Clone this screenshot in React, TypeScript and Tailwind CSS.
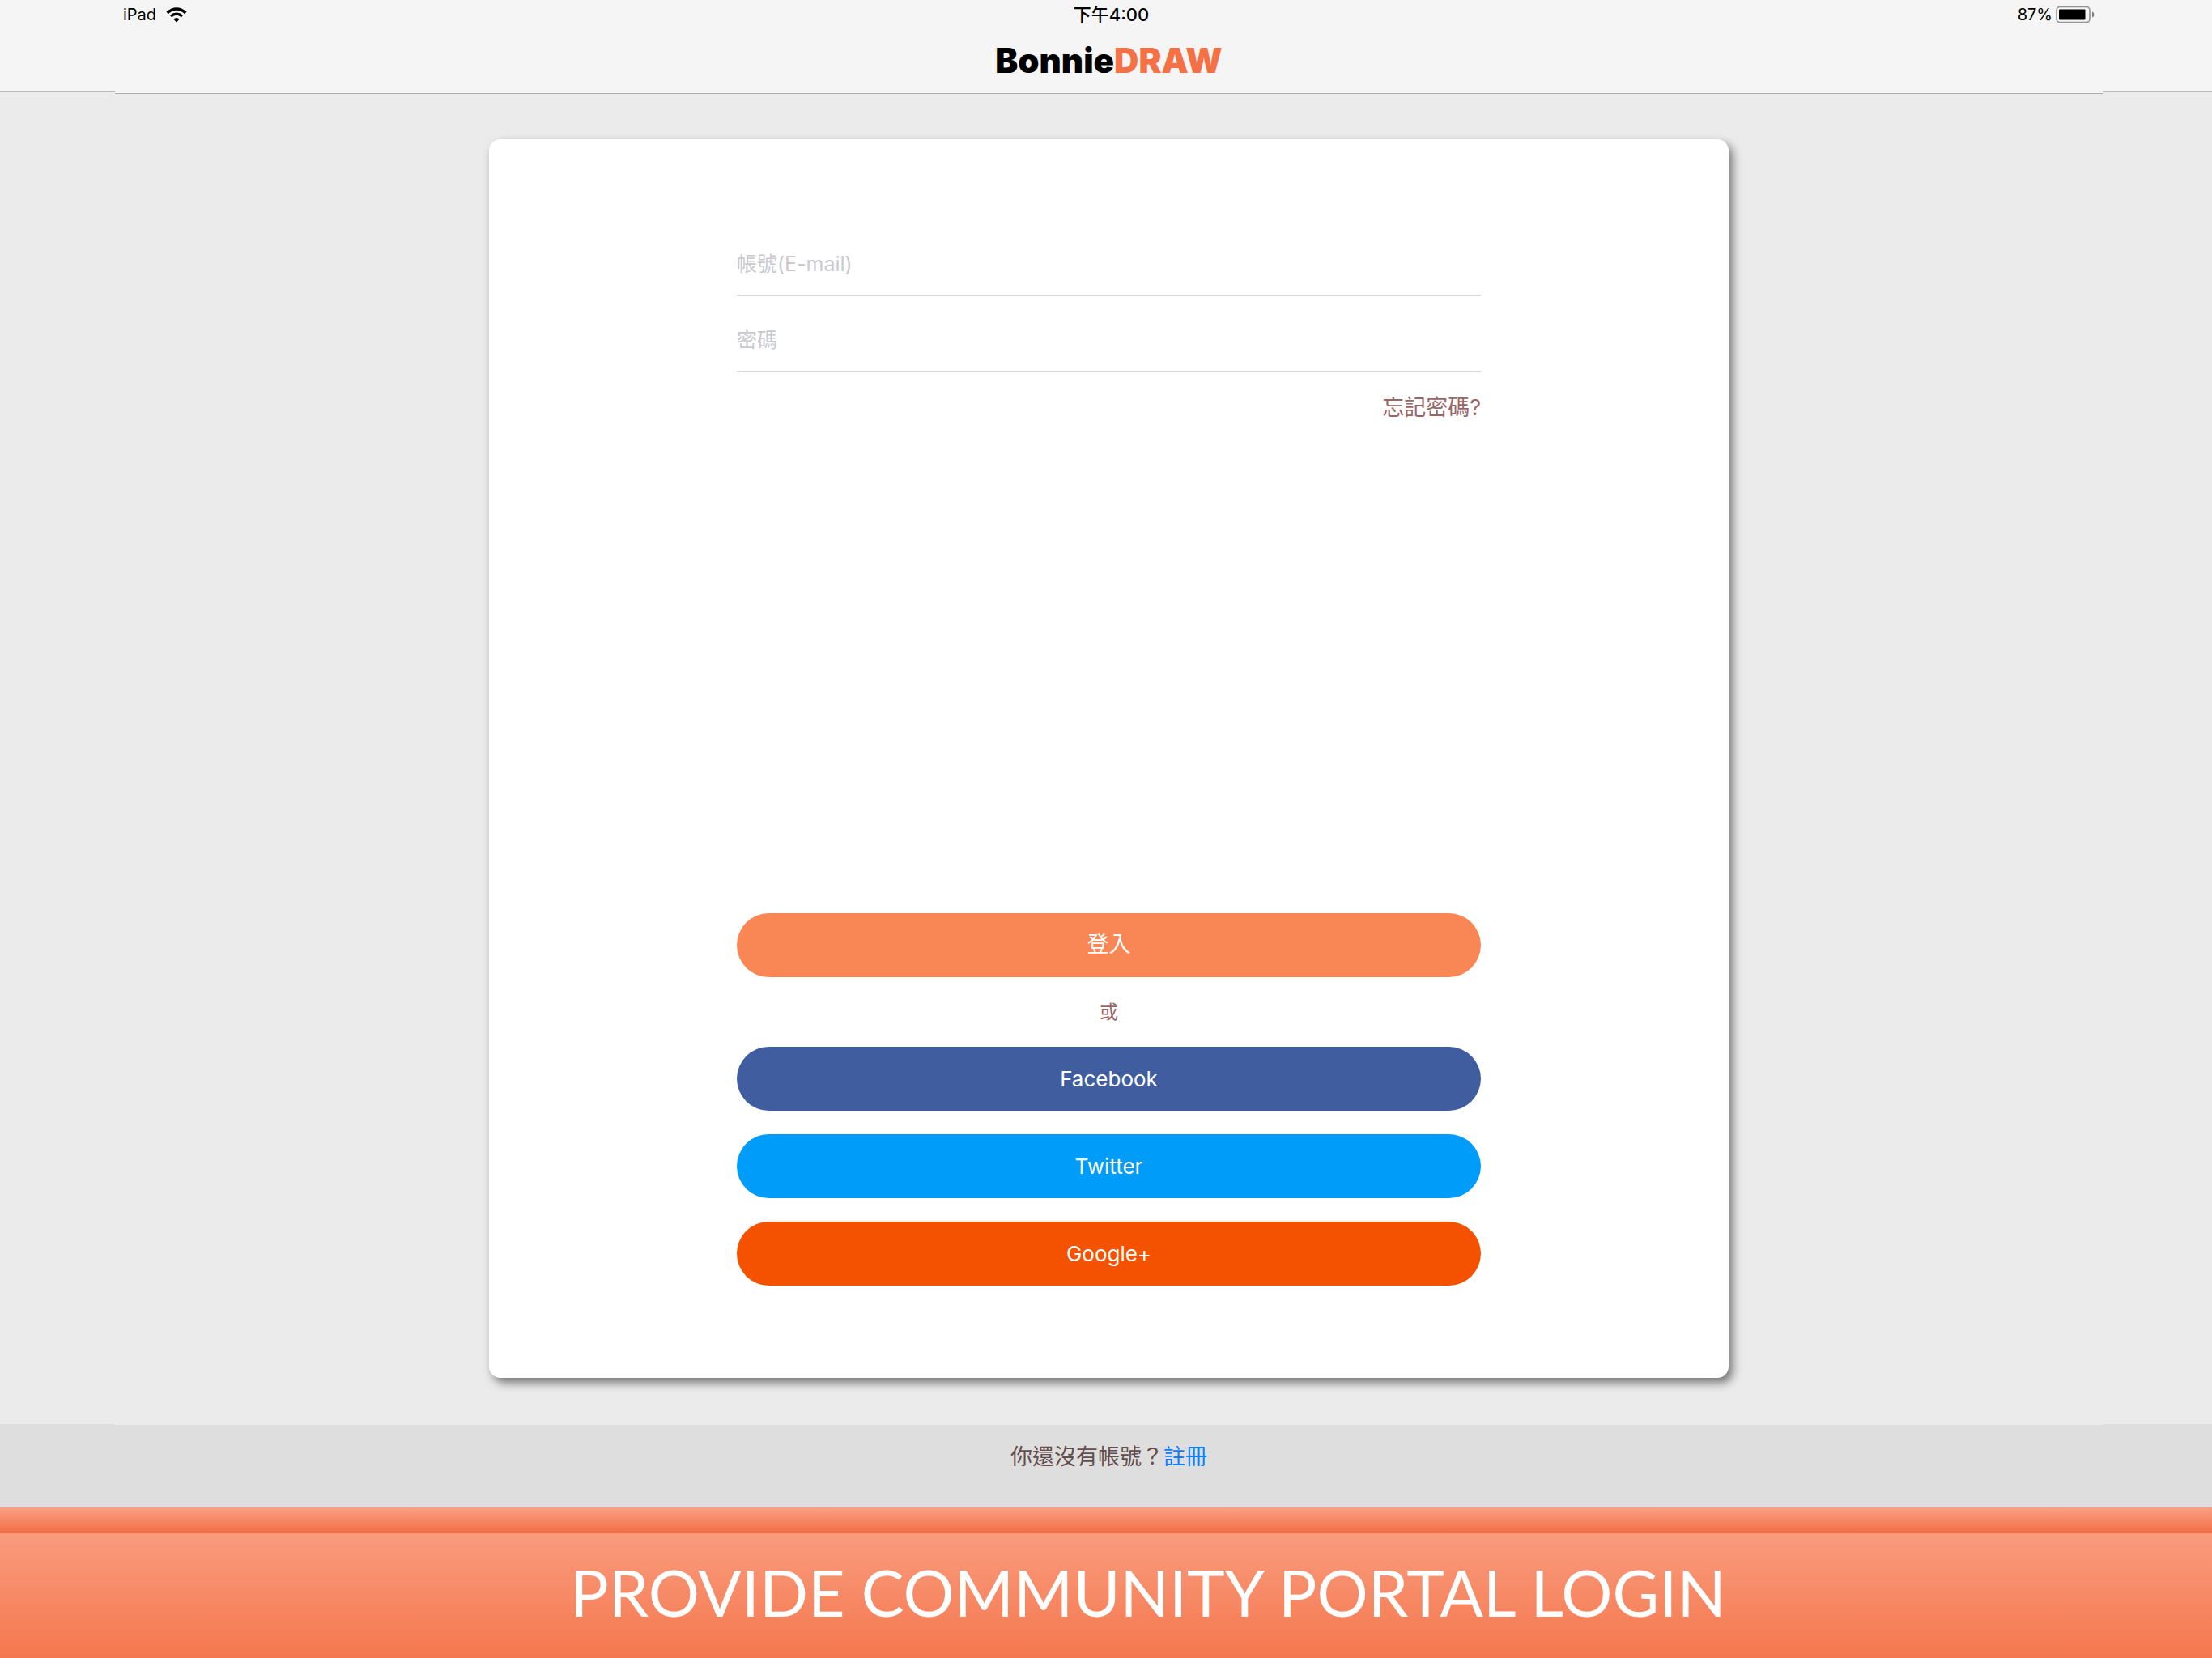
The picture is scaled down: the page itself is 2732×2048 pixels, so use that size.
import type { ReactNode } from "react";

function WifiIcon() {
  return (
    <svg viewBox="0 0 26 19" className="h-[19px] w-[26px]" aria-label="Wi-Fi" role="img">
      <path d="M13 18.4 9.2 14.6Q13 11.4 16.8 14.6Z" fill="#000" />
      <path d="M5.9 11.1Q13 5.1 20.1 11.1" fill="none" stroke="#000" strokeWidth="3.3" />
      <path d="M1.6 6.9Q13-2.9 24.4 6.9" fill="none" stroke="#000" strokeWidth="3.5" />
    </svg>
  );
}

function BatteryIcon() {
  return (
    <svg viewBox="0 0 48 22" className="h-[22px] w-[48px]" aria-label="Battery" role="img">
      <rect x="1" y="1.5" width="41" height="19" rx="4" fill="none" stroke="#929292" strokeWidth="1.6" />
      <rect x="4" y="4.5" width="32.5" height="13" rx="1" fill="#000" />
      <path d="M45 7.5c3.2 1 3.2 6 0 7z" fill="#7c7c7c" />
    </svg>
  );
}

function PillButton({ color, children }: { color: string; children: ReactNode }) {
  return (
    <button
      type="button"
      className={`flex h-[79px] w-full cursor-pointer items-center justify-center rounded-full text-white ${color}`}
    >
      {children}
    </button>
  );
}

function Field({ id, type, label }: { id: string; type: string; label: string }) {
  return (
    <input
      id={id}
      type={type}
      aria-label={label}
      placeholder={label}
      className="block h-[80px] w-full border-b-2 border-[#d9d9da] bg-transparent pt-0.5 text-[25px] outline-none placeholder:text-[#c9c9cf]"
    />
  );
}

export default function App() {
  return (
    <div className="flex min-h-screen flex-col bg-[#ebebeb] font-['Inter','Noto_Sans_CJK_TC',sans-serif] font-normal">
      <header className="flex items-start">
        <div className="h-[114px] w-[142px] border-b border-[#b9b9b9] bg-[#f5f5f5]" />
        <div className="h-[116px] flex-1 border-b border-[#adadad] bg-[#f5f5f5]">
          <div className="grid h-9 grid-cols-3 items-center px-2.5 text-[20px] text-black">
            <div className="flex items-center gap-3">
              <span>iPad</span>
              <WifiIcon />
            </div>
            <time className="pl-1.5 text-center text-[22px] font-medium">下午4:00</time>
            <div className="flex items-center justify-end gap-1">
              <span>87%</span>
              <BatteryIcon />
            </div>
          </div>
          <h1 className="text-center text-[42px] leading-[78px] font-black text-black">
            Bonnie<span className="text-[#f47145]">DRAW</span>
          </h1>
        </div>
        <div className="h-[114px] w-[135px] border-b border-[#b9b9b9] bg-[#f5f5f5]" />
      </header>

      <main className="flex flex-1 justify-center pt-14 pr-[135px] pb-[57px] pl-[142px]">
        <form className="flex w-[62.4%] flex-col items-center justify-between rounded-[14px] bg-white py-[114px] shadow-[5px_6px_12px_rgba(0,0,0,0.5)]">
          <div className="flex w-[60%] flex-col">
            <div className="flex flex-col gap-[14px]">
              <Field id="email" type="email" label="帳號(E-mail)" />
              <Field id="password" type="password" label="密碼" />
            </div>
            <a href="#forgot" className="mt-6 self-end text-[27px] leading-10 text-[#996666]">
              忘記密碼?
            </a>
          </div>
          <div className="flex w-[60%] flex-col">
            <PillButton color="bg-[#f98655] text-[27px]">登入</PillButton>
            <p className="flex h-[86px] items-center justify-center text-[23px] text-[#996666]">或</p>
            <div className="flex flex-col gap-[29px]">
              <PillButton color="bg-[#405d9f] text-[26px]">Facebook</PillButton>
              <PillButton color="bg-[#009cf9] text-[26px]">Twitter</PillButton>
              <PillButton color="bg-[#f55200] text-[26px]">Google+</PillButton>
            </div>
          </div>
        </form>
      </main>

      <footer>
        <div className="flex items-end">
          <div className="h-[103px] w-[142px] bg-[#dedede]" />
          <div className="h-[102px] flex-1 bg-[#dedede] pt-5 text-center text-[27px] leading-10 text-[#644d4b]">
            你還沒有帳號？
            <a href="#register" className="text-[#0a80ff]">
              註冊
            </a>
          </div>
          <div className="h-[103px] w-[135px] bg-[#dedede]" />
        </div>
        <div className="h-8 bg-linear-to-b from-[#faa084] to-[#f16c42]" />
        <div className="flex h-[154px] items-center justify-center bg-linear-to-b from-[#f99b7c] to-[#f4774e] pb-[10px] pl-[104px]">
          <h2 className="font-['Lato',sans-serif] text-[79px] leading-none text-white">
            PROVIDE COMMUNITY PORTAL LOGIN
          </h2>
        </div>
      </footer>
    </div>
  );
}
